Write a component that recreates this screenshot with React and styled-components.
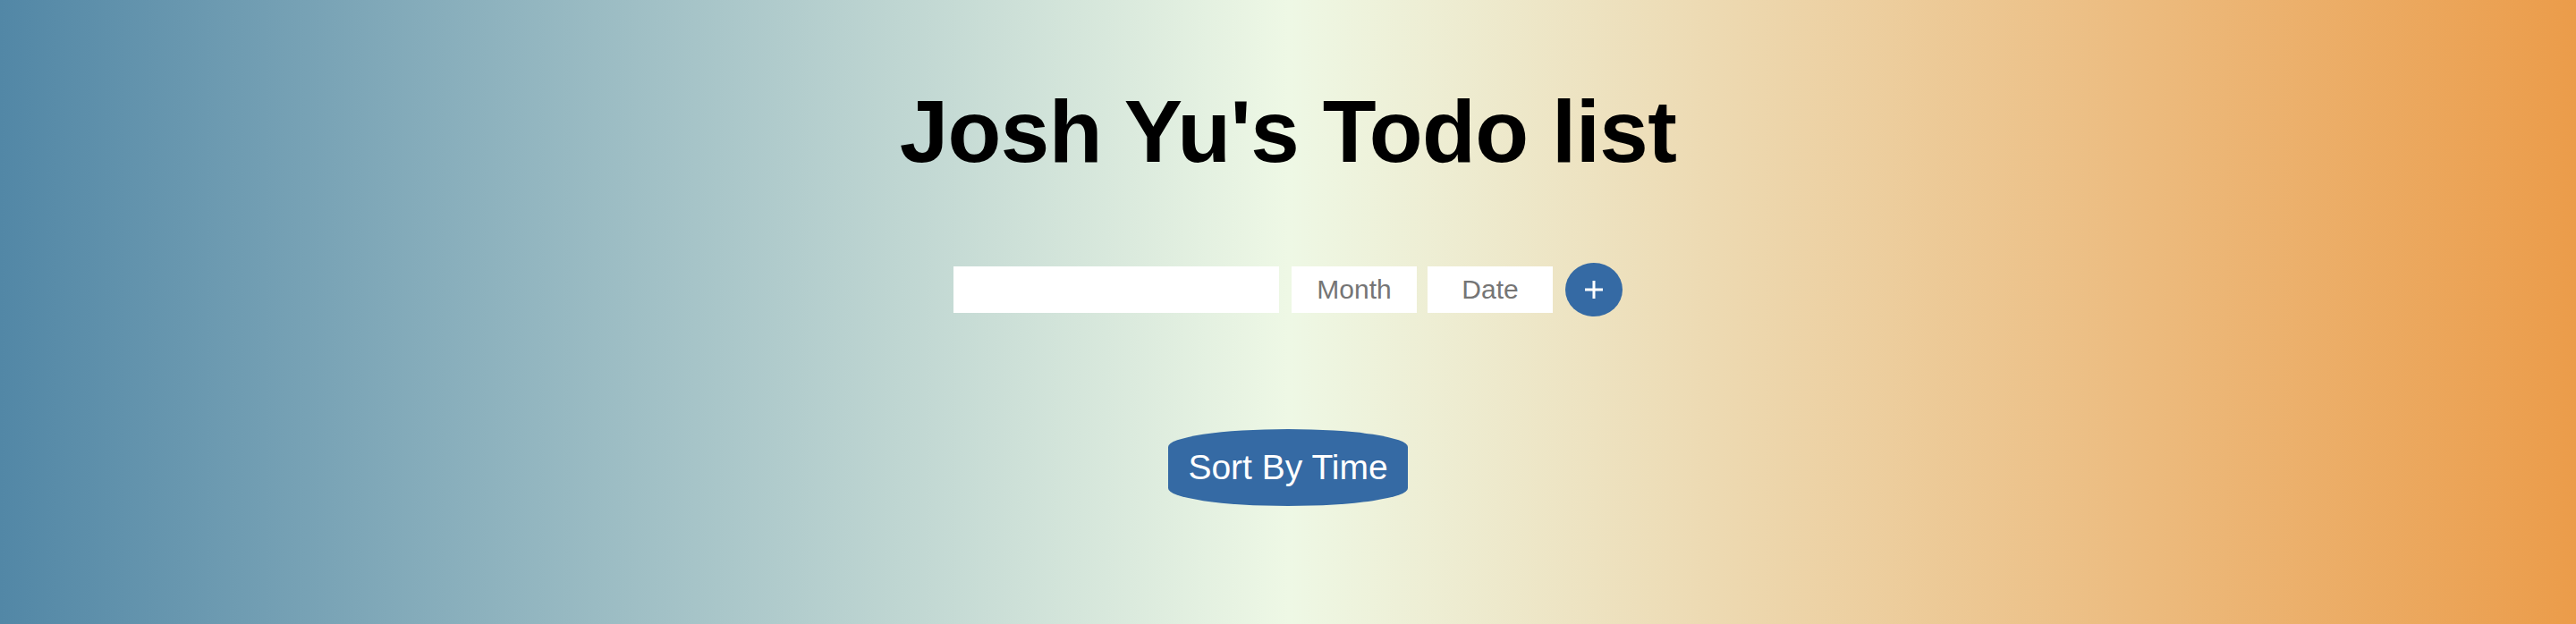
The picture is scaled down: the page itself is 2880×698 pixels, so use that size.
import React from "react";
import styled, { createGlobalStyle } from "styled-components";

const Global = createGlobalStyle`
  html, body { margin: 0; padding: 0; }
  body {
    min-height: 100vh;
    background: linear-gradient(90deg, #5287a6 0%, #eef8e5 50%, #eb9c4a 100%);
    font-family: "Liberation Sans", Arial, sans-serif;
  }
`;

const Page = styled.div`
  min-height: 100vh;
  display: flex;
  flex-direction: column;
  align-items: center;
`;

const Title = styled.h1`
  margin: 87px 0 0;
  font-size: 98px;
  line-height: 120px;
  letter-spacing: -0.6px;
  font-weight: 700;
  color: #000;
`;

const Form = styled.form`
  margin-top: 87px;
  display: flex;
  align-items: center;
`;

const Field = styled.input`
  box-sizing: border-box;
  width: ${(p) => p.$w}px;
  height: 52px;
  margin-left: ${(p) => p.$ml || 0}px;
  border: none;
  outline: none;
  background: #fff;
  padding: 0 8px;
  font-family: "Liberation Sans", Arial, sans-serif;
  font-size: 30px;
  text-align: center;
  color: #333;
  &::placeholder { color: #757575; }
`;

const AddButton = styled.button`
  margin-left: 14px;
  width: 64px;
  height: 60px;
  border: none;
  border-radius: 50%;
  background: #356aa4;
  display: flex;
  align-items: center;
  justify-content: center;
  padding: 0;
  cursor: pointer;
`;

const SortButton = styled.button`
  margin-top: 126px;
  box-sizing: border-box;
  width: 268px;
  height: 86px;
  border: none;
  border-radius: 50% / 20px;
  background: #356aa4;
  color: #fff;
  font-family: "Liberation Sans", Arial, sans-serif;
  font-size: 39px;
  padding: 0;
  cursor: pointer;
`;

export default function App() {
  return (
    <>
      <Global />
      <Page>
        <Title>Josh Yu's Todo list</Title>
        <Form onSubmit={(e) => e.preventDefault()}>
          <Field $w={364} type="text" />
          <Field $w={140} $ml={14} type="text" placeholder="Month" />
          <Field $w={140} $ml={12} type="text" placeholder="Date" />
          <AddButton type="submit" aria-label="add">
            <svg width="22" height="22" viewBox="0 0 22 22">
              <path d="M11 1v20M1 11h20" stroke="#fff" strokeWidth="3" fill="none" />
            </svg>
          </AddButton>
        </Form>
        <SortButton type="button">Sort By Time</SortButton>
      </Page>
    </>
  );
}
